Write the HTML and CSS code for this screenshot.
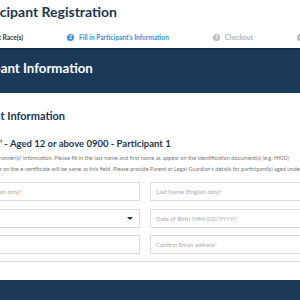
FILE: index.html
```html
<!DOCTYPE html>
<html lang="en">
<head>
    <meta charset="UTF-8">
    <meta name="viewport" content="width=device-width, initial-scale=1.0">
    <title>Participant Registration</title>
    <link rel="stylesheet" href="styles.css">
</head>
<body>
<div class="page">
    <div class="top">
        <h1 class="title">Participant Registration</h1>
        <button class="btn-top">EN</button>
    </div>

    <div class="steps">
        <div class="step done"><span class="num">1</span>Select Race(s)</div>
        <div class="step active"><span class="num">2</span>Fill in Participant's Information</div>
        <div class="step"><span class="num">3</span>Checkout</div>
        <div class="step"><span class="num">4</span>Complete</div>
    </div>

    <div class="band">
        <h2>Participant Information</h2>
    </div>

    <div class="card">
        <div class="card-head">
            <h3>Participant Information</h3>
            <span class="req">* Required</span>
        </div>
        <h4 class="race">‘5K Fun Run’ - Aged 12 or above 0900 - Participant 1</h4>
        <div class="desc">
            <div class="line-a">Please fill in the runner(s)' information. Please fill in the last name and first name as appear on the identification document(s) (e.g. HKID/</div>
            <div class="line-b">Passport). The name on the e-certificate will be same as this field. Please provide Parent or Legal Guardian's details for participant(s) aged under 18.</div>
        </div>
        <div class="form-grid">
            <div class="field">First Name (English only)*</div>
            <div class="field">Last Name (English only)*</div>
            <div class="field select">Gender*<span class="arrow"></span></div>
            <div class="field">Date of Birth (MM/DD/YYYY)*</div>
            <div class="field">Email address*</div>
            <div class="field">Confirm Email address*</div>
        </div>
    </div>

    <div class="footer"></div>
</div>
</body>
</html>
```

FILE: styles.css
```css
html, body {
    margin: 0;
    padding: 0;
    overflow: hidden;
}
body {
    font-family: Lato, "Open Sans", sans-serif;
    color: #333;
    background: #fff;
    width: 300px;
    height: 300px;
}
.page {
    width: 720px;
    margin-left: -120px;
}
.top {
    display: flex;
    align-items: center;
    justify-content: space-between;
    height: 22px;
    padding: 0 0 0 90px;
}
.title {
    margin: 0;
    font-size: 14px;
    font-weight: 700;
    color: #1c3552;
}
.btn-top {
    margin-right: 165px;
    width: 20px;
    height: 15px;
    border: none;
    border-radius: 3px;
    background: #3b8fd8;
    color: #fff;
    font-size: 6px;
}
.steps {
    display: flex;
    gap: 44px;
    height: 22px;
    padding-top: 4px;
    align-items: center;
    font-size: 6.6px;
    font-weight: 700;
    color: #b3b3b3;
}
.step {
    display: flex;
    align-items: center;
    gap: 5px;
    white-space: nowrap;
}
.step .num {
    display: inline-flex;
    align-items: center;
    justify-content: center;
    width: 7px;
    height: 7px;
    border-radius: 50%;
    background: #b8b8b8;
    color: #fff;
    font-size: 5px;
}
.step.done {
    width: 143px;
    justify-content: flex-end;
    color: #333;
}
.step.done .num { background: #333; }
.step.active { color: #3b8fd8; }
.step.active .num { background: #3b8fd8; }
.band {
    background: #1b3a5a;
    border-top: 2px solid #142c46;
    height: 36px;
    padding-bottom: 7px;
    display: flex;
    align-items: center;
    padding-left: 75px;
}
.band h2 {
    margin: 0;
    color: #fff;
    font-size: 13.3px;
    font-weight: 700;
}
.card {
    border-bottom: 1px solid #dcdcdc;
    padding: 0 0 7px 71px;
}
.card-head {
    display: flex;
    align-items: center;
    justify-content: space-between;
    height: 45px;
    padding-right: 268px;
}
.card-head h3 {
    margin: 0;
    font-size: 11px;
    font-weight: 700;
    color: #1c3552;
}
.req {
    font-size: 6px;
    color: #999;
}
.race {
    margin: 0 0 0 -2px;
    font-size: 9.5px;
    line-height: 11px;
    font-weight: 700;
    color: #1c3552;
}
.desc {
    margin-top: 3px;
    font-size: 5.6px;
    color: #777;
    line-height: 11px;
}
.desc div { white-space: nowrap; }
.desc .line-a { padding-left: 8px; }
.desc .line-b { padding-left: 1px; }
.form-grid {
    margin: 8px 0 0 -2px;
    display: grid;
    grid-template-columns: 191px 250px;
    gap: 7.5px 10px;
}
.field {
    position: relative;
    height: 17px;
    border: 1px solid #dcdcdc;
    padding-left: 5px;
    display: flex;
    align-items: center;
    font-size: 6px;
    color: #aaa;
}
.select { color: transparent; }
.arrow {
    position: absolute;
    right: 6px;
    top: 7px;
    border-left: 3px solid transparent;
    border-right: 3px solid transparent;
    border-top: 3px solid #1c3552;
}
.footer {
    margin-top: 18px;
    height: 30px;
    background: #1b3a5a;
}
```
